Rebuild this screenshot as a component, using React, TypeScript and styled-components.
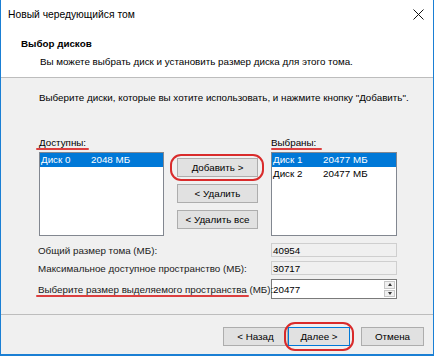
import React from "react";
import styled, { createGlobalStyle } from "styled-components";

const GlobalStyle = createGlobalStyle`
  html, body {
    margin: 0;
    padding: 0;
    background: #ffffff;
  }
  * {
    box-sizing: border-box;
  }
`;

const RED = "#d92b2b";

const Window = styled.div`
  width: 434px;
  height: 356px;
  display: flex;
  flex-direction: column;
  border: 1px solid #1a7fd4;
  border-top: none;
  border-bottom-width: 2px;
  font-family: "Liberation Sans", Arial, sans-serif;
  font-size: 9.8px;
  color: #000;
  background: #f0f0f0;
  overflow: hidden;
`;

const TitleBar = styled.div`
  height: 28px;
  display: flex;
  align-items: center;
  justify-content: space-between;
  padding: 0 9px 0 7px;
  background: #fff;
  font-size: 10.3px;
`;

const Header = styled.div`
  height: 50px;
  padding: 9px 0 0 20px;
  background: #fff;
  border-bottom: 1px solid #bdbdbd;
`;

const HeaderTitle = styled.div`
  font-weight: bold;
  line-height: 14px;
  height: 14px;
`;

const HeaderSub = styled.div`
  padding-left: 19px;
  margin-top: 4px;
  line-height: 14px;
`;

const Body = styled.div`
  flex: 1;
  display: flex;
  flex-direction: column;
  padding: 13px 36px 0 38px;
`;

const Intro = styled.div`
  line-height: 14px;
  height: 14px;
  white-space: nowrap;
`;

const Columns = styled.div`
  display: grid;
  grid-template-columns: 125px 81px 126px;
  column-gap: 13px;
  margin-top: 31px;
`;

const Column = styled.div`
  display: flex;
  flex-direction: column;
`;

const Caption = styled.span`
  position: relative;
  line-height: 14px;
  height: 16px;
  align-self: flex-start;
`;

const RedLine = styled.span<{ $left: number; $width: number; $top: number }>`
  position: absolute;
  left: ${(p) => p.$left}px;
  top: ${(p) => p.$top}px;
  width: ${(p) => p.$width}px;
  height: 2px;
  border-radius: 1px;
  background: ${RED};
  opacity: 0.9;
`;

const ListBox = styled.div`
  height: 84px;
  background: #fff;
  border: 1px solid #828790;
  padding: 0;
`;

const ListRow = styled.div<{ $selected?: boolean }>`
  display: flex;
  height: 14px;
  line-height: 14px;
  padding-left: 1px;
  background: ${(p) => (p.$selected ? "#0078d7" : "transparent")};
  color: ${(p) => (p.$selected ? "#fff" : "#000")};
`;

const NameCell = styled.span`
  width: 50px;
`;

const ButtonStack = styled.div`
  display: flex;
  flex-direction: column;
  gap: 7px;
  padding-top: 22px;
`;

const Button = styled.div<{ $width?: number; $default?: boolean }>`
  position: relative;
  height: 19px;
  width: ${(p) => (p.$width ? `${p.$width}px` : "auto")};
  display: flex;
  align-items: center;
  justify-content: center;
  background: #e1e1e1;
  border: 1px solid ${(p) => (p.$default ? "#0078d7" : "#adadad")};
  white-space: nowrap;
`;

const Ring = styled.span<{ $x: number; $y: number; $w: number; $h: number }>`
  position: absolute;
  left: ${(p) => p.$x}px;
  top: ${(p) => p.$y}px;
  width: ${(p) => p.$w}px;
  height: ${(p) => p.$h}px;
  border: 2px solid ${RED};
  border-radius: 11px;
  pointer-events: none;
`;

const InfoGrid = styled.div`
  display: grid;
  grid-template-columns: minmax(0, 1fr) 126px;
  grid-template-rows: 14px 14px 20px;
  row-gap: 4px;
  margin-top: 7px;
  margin-left: -1px;
`;

const InfoLabel = styled.div`
  position: relative;
  display: flex;
  align-items: center;
  white-space: nowrap;
  color: #1a1a1a;
`;

const ReadOnlyBox = styled.div`
  background: #f0f0f0;
  border: 1px solid #cfcfcf;
  padding-left: 1px;
  display: flex;
  align-items: center;
`;

const NumberInput = styled.div`
  display: flex;
  background: #fff;
  border: 1px solid #7a7a7a;
`;

const NumberValue = styled.div`
  flex: 1;
  display: flex;
  align-items: center;
  padding-left: 1px;
`;

const Spinner = styled.div`
  width: 14px;
  display: flex;
  flex-direction: column;
  border-left: 1px solid #ffffff;
  padding: 1px;
  gap: 1px;
`;

const SpinHalf = styled.div`
  flex: 1;
  display: flex;
  align-items: center;
  justify-content: center;
  background: #f0f0f0;
  border: 1px solid #c6c6c6;
`;

const Arrow = styled.span<{ $up?: boolean }>`
  width: 0;
  height: 0;
  border-left: 2.5px solid transparent;
  border-right: 2.5px solid transparent;
  ${(p) =>
    p.$up ? "border-bottom: 3px solid #333;" : "border-top: 3px solid #333;"}
`;

const Footer = styled.div`
  height: 40px;
  border-top: 1px solid #bdbdbd;
  display: flex;
  align-items: flex-start;
  justify-content: flex-end;
  padding: 12px 9px 0 0;
`;

const NavGroup = styled.div`
  display: flex;
  margin-right: 11px;
`;

const CloseIcon = () => (
  <svg width="11" height="11" viewBox="0 0 11 11">
    <path d="M0.5 0.5 L10.5 10.5 M10.5 0.5 L0.5 10.5" stroke="#111" strokeWidth="1" />
  </svg>
);

type Disk = { name: string; size: string; selected?: boolean };

const available: Disk[] = [{ name: "Диск 0", size: "2048 МБ", selected: true }];
const chosen: Disk[] = [
  { name: "Диск 1", size: "20477 МБ", selected: true },
  { name: "Диск 2", size: "20477 МБ" },
];

const DiskList = ({ items }: { items: Disk[] }) => (
  <ListBox>
    {items.map((d) => (
      <ListRow key={d.name} $selected={d.selected}>
        <NameCell>{d.name}</NameCell>
        <span>{d.size}</span>
      </ListRow>
    ))}
  </ListBox>
);

export default function App() {
  return (
    <>
      <GlobalStyle />
      <Window>
        <TitleBar>
          <span>Новый чередующийся том</span>
          <CloseIcon />
        </TitleBar>
        <Header>
          <HeaderTitle>Выбор дисков</HeaderTitle>
          <HeaderSub>Вы можете выбрать диск и установить размер диска для этого тома.</HeaderSub>
        </Header>
        <Body>
          <Intro>
            Выберите диски, которые вы хотите использовать, и нажмите кнопку "Добавить".
          </Intro>
          <Columns>
            <Column>
              <Caption>
                Доступны:
                <RedLine $left={-3} $top={12} $width={53} />
              </Caption>
              <DiskList items={available} />
            </Column>
            <ButtonStack>
              <Button>
                Добавить &gt;
                <Ring $x={-8} $y={-5} $w={94} $h={27} />
              </Button>
              <Button>&lt; Удалить</Button>
              <Button>&lt; Удалить все</Button>
            </ButtonStack>
            <Column>
              <Caption>
                Выбраны:
                <RedLine $left={0} $top={12} $width={51} />
              </Caption>
              <DiskList items={chosen} />
            </Column>
          </Columns>
          <InfoGrid>
            <InfoLabel>Общий размер тома (МБ):</InfoLabel>
            <ReadOnlyBox>40954</ReadOnlyBox>
            <InfoLabel>Максимальное доступное пространство (МБ):</InfoLabel>
            <ReadOnlyBox>30717</ReadOnlyBox>
            <InfoLabel>
              Выберите размер выделяемого пространства (МБ):
              <RedLine $left={-2} $top={16} $width={213} />
            </InfoLabel>
            <NumberInput>
              <NumberValue>20477</NumberValue>
              <Spinner>
                <SpinHalf>
                  <Arrow $up />
                </SpinHalf>
                <SpinHalf>
                  <Arrow />
                </SpinHalf>
              </Spinner>
            </NumberInput>
          </InfoGrid>
        </Body>
        <Footer>
          <NavGroup>
            <Button $width={65}>&lt; Назад</Button>
            <Button $width={62} $default>
              Далее &gt;
              <Ring $x={-5} $y={-6} $w={70} $h={29} />
            </Button>
          </NavGroup>
          <Button $width={63}>Отмена</Button>
        </Footer>
      </Window>
    </>
  );
}
